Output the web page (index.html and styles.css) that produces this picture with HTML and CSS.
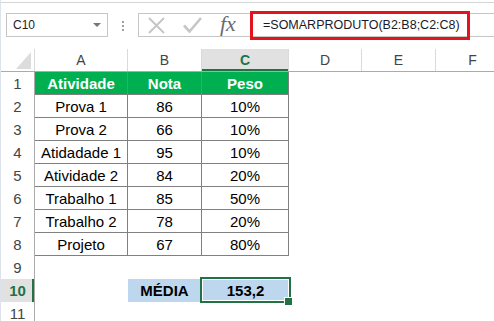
FILE: index.html
```html
<!DOCTYPE html>
<html lang="pt-BR">
<head>
    <meta charset="UTF-8">
    <meta name="viewport" content="width=device-width, initial-scale=1.0">
    <title>Média ponderada</title>
    <link rel="stylesheet" href="styles.css">
</head>
<body>
    <div class="app">
        <div class="topbar">
            <div class="name-box"><span>C10</span><span class="caret"></span></div>
            <div class="grip"><i></i><i></i><i></i></div>
            <div class="formula-bar">
                <div class="fx-buttons">
                    <svg width="17" height="17" viewBox="0 0 17 17"><path d="M1 1L16 16M16 1L1 16" stroke="#c6c6c6" stroke-width="2" fill="none"/></svg>
                    <svg width="19" height="16" viewBox="0 0 19 16"><path d="M1 8.5L6.5 14.5L18 1" stroke="#c6c6c6" stroke-width="2.6" fill="none"/></svg>
                    <span class="fx">fx</span>
                </div>
                <div class="formula">=SOMARPRODUTO(B2:B8;C2:C8)</div>
            </div>
            <div class="highlight"></div>
        </div>

        <div class="sheet">
            <div class="row head-row">
                <div class="corner"></div>
                <div class="col-head col-a">A</div>
                <div class="col-head col-b">B</div>
                <div class="col-head col-c active">C</div>
                <div class="col-head col-d">D</div>
                <div class="col-head col-e">E</div>
                <div class="col-head col-f">F</div>
            </div>
            <div class="row">
                <div class="row-head">1</div>
                <div class="cell grid th col-a">Atividade</div>
                <div class="cell grid th col-b">Nota</div>
                <div class="cell grid th col-c">Peso</div>
            </div>
            <div class="row">
                <div class="row-head">2</div>
                <div class="cell grid col-a">Prova 1</div>
                <div class="cell grid col-b">86</div>
                <div class="cell grid col-c">10%</div>
            </div>
            <div class="row">
                <div class="row-head">3</div>
                <div class="cell grid col-a">Prova 2</div>
                <div class="cell grid col-b">66</div>
                <div class="cell grid col-c">10%</div>
            </div>
            <div class="row">
                <div class="row-head">4</div>
                <div class="cell grid col-a">Atidadade 1</div>
                <div class="cell grid col-b">95</div>
                <div class="cell grid col-c">10%</div>
            </div>
            <div class="row">
                <div class="row-head">5</div>
                <div class="cell grid col-a">Atividade 2</div>
                <div class="cell grid col-b">84</div>
                <div class="cell grid col-c">20%</div>
            </div>
            <div class="row">
                <div class="row-head">6</div>
                <div class="cell grid col-a">Trabalho 1</div>
                <div class="cell grid col-b">85</div>
                <div class="cell grid col-c">50%</div>
            </div>
            <div class="row">
                <div class="row-head">7</div>
                <div class="cell grid col-a">Trabalho 2</div>
                <div class="cell grid col-b">78</div>
                <div class="cell grid col-c">20%</div>
            </div>
            <div class="row">
                <div class="row-head">8</div>
                <div class="cell grid col-a">Projeto</div>
                <div class="cell grid col-b">67</div>
                <div class="cell grid col-c">80%</div>
            </div>
            <div class="row">
                <div class="row-head">9</div>
            </div>
            <div class="row">
                <div class="row-head active">10</div>
                <div class="cell col-a"></div>
                <div class="cell col-b total">MÉDIA</div>
                <div class="cell col-c total selected">153,2</div>
            </div>
            <div class="row">
                <div class="row-head">11</div>
            </div>
        </div>
    </div>
</body>
</html>
```

FILE: styles.css
```css
* {
    box-sizing: border-box;
}
body {
    margin: 0;
    background: #fff;
    font-family: "Liberation Sans", Arial, sans-serif;
}
.app {
    width: 494px;
    height: 321px;
    overflow: hidden;
    border-left: 1px solid #dde3ea;
}

/* name box + formula bar */
.topbar {
    position: relative;
    display: flex;
    align-items: flex-start;
    margin-top: 2px;
    height: 47px;
    padding-top: 10px;
    border-top: 1px solid #d5d5d5;
}
.name-box {
    display: flex;
    align-items: center;
    justify-content: space-between;
    margin-left: 5px;
    width: 102px;
    height: 24px;
    padding: 0 6px 0 6px;
    border: 1px solid #c6c6c6;
    font-size: 12px;
    color: #222;
}
.caret {
    width: 0;
    height: 0;
    border-left: 4px solid transparent;
    border-right: 4px solid transparent;
    border-top: 4px solid #777;
}
.grip {
    width: 30px;
    padding-top: 8px;
    display: flex;
    flex-direction: column;
    align-items: center;
    gap: 2px;
}
.grip i {
    width: 2px;
    height: 2px;
    background: #a0a0a0;
}
.formula-bar {
    flex: 1;
    display: flex;
    align-items: center;
    height: 24px;
    border: 1px solid #c6c6c6;
    border-right: none;
}
.fx-buttons {
    display: flex;
    align-items: center;
    gap: 18px;
    width: 112px;
    padding-left: 9px;
}
.fx {
    font-family: "Liberation Serif", "Times New Roman", serif;
    font-style: italic;
    font-size: 22px;
    color: #6b6b6b;
    line-height: 1;
    margin-top: -2px;
}
.formula {
    padding-left: 12px;
    font-size: 12.5px;
    color: #1a1a2a;
    white-space: nowrap;
}
.highlight {
    position: absolute;
    left: 249px;
    top: 8px;
    width: 220px;
    height: 29px;
    border: 3px solid #e3141f;
}

/* worksheet */
.row {
    display: flex;
    height: 23px;
}
.row > div {
    flex-shrink: 0;
    height: 100%;
    display: flex;
    align-items: center;
    justify-content: center;
}
.head-row {
    border-bottom: 1px solid #ababab;
}
.corner {
    position: relative;
    width: 34px;
    border-right: 1px solid #dadada;
}
.corner::after {
    content: '';
    position: absolute;
    right: 3px;
    bottom: 2px;
    border-left: 15px solid transparent;
    border-bottom: 17px solid #dcdcdc;
}
.col-head {
    border-right: 1px solid #dadada;
    font-size: 14px;
    color: #444;
}
.col-head.active {
    background: #e1e1e1;
    color: #217346;
    font-weight: bold;
    box-shadow: inset 0 -2px #217346;
}
.row-head {
    width: 34px;
    border-right: 1px solid #ababab;
    font-size: 15px;
    color: #444;
}
.row-head.active {
    background: #e1e1e1;
    color: #217346;
    font-weight: bold;
    box-shadow: inset -2px 0 #217346;
}
.col-a { width: 93px; }
.col-b { width: 74px; }
.col-c { width: 87px; }
.col-d { width: 73px; }
.col-e { width: 74px; }
.col-f { width: 74px; }

.cell {
    font-size: 15px;
    color: #000;
}
.cell.grid {
    border-right: 1px solid #808080;
    border-bottom: 1px solid #808080;
}
.cell.th {
    background: #00b050;
    color: #fff;
    font-weight: bold;
}
.cell.total {
    background: #bdd7ee;
    font-weight: bold;
}
.cell.col-b.total {
    width: 73px;
    margin-right: 1px;
}
.selected {
    position: relative;
}
.selected::after {
    content: '';
    position: absolute;
    left: -2px;
    top: -2px;
    right: -2px;
    bottom: -1px;
    border: 2px solid #217346;
    box-shadow: inset 0 0 0 1px #fff;
}
.selected::before {
    content: '';
    position: absolute;
    right: -4px;
    bottom: -4px;
    width: 7px;
    height: 7px;
    background: #217346;
    border: 1px solid #fff;
    z-index: 1;
}
```
